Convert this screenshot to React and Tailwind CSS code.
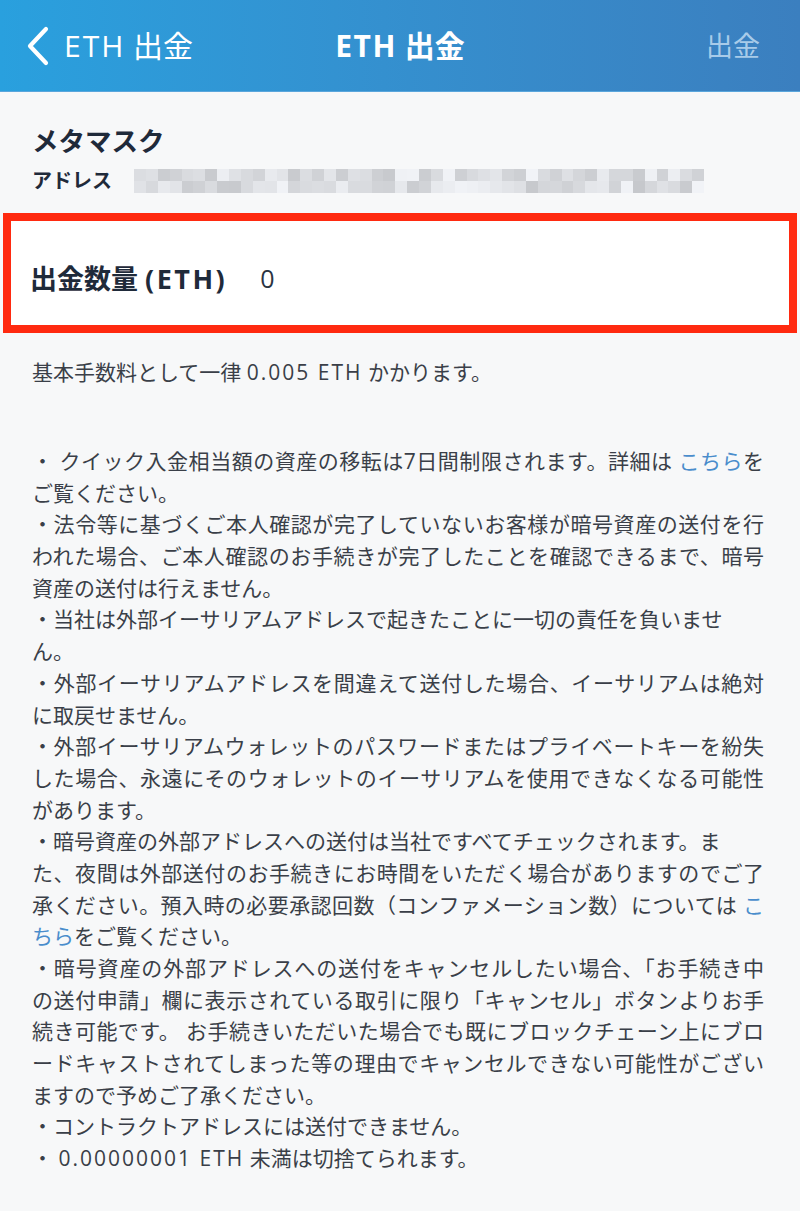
import React from "react";

const FONT = { fontFamily: '"Open Sans", "Noto Sans CJK JP", "Noto Sans", sans-serif' };

function Blur() {
  const shades = [];
  let s = 7;
  for (let r = 0; r < 2; r++) {
    const row = [];
    for (let c = 0; c < 48; c++) {
      s = (s * 9301 + 49297) % 233280;
      const v = 198 + Math.floor((s / 233280) * 44);
      row.push(`rgb(${v},${v + 2},${v + 6})`);
    }
    shades.push(row);
  }
  return (
    <div className="flex flex-col w-[570px] h-[24px] ml-[22px]">
      {shades.map((row, i) => (
        <div key={i} className="flex flex-1">
          {row.map((c, j) => (
            <div key={j} className="flex-1" style={{ background: c }} />
          ))}
        </div>
      ))}
    </div>
  );
}

const L = ({ children, j }) => (
  <div
    className={
      "whitespace-nowrap h-[31.7px] leading-[31.7px] " +
      (j ? "text-justify [text-align-last:justify]" : "")
    }
  >
    {children}
  </div>
);

const A = ({ children }) => <span className="text-[#4a8dcc]">{children}</span>;
const W = ({ children }) => <span className="tracking-[2px]">{children}</span>;

export default function App() {
  return (
    <div className="min-h-[1211px] w-[800px] bg-[#f7f8f9]" style={FONT}>
      <header className="h-[92px] bg-gradient-to-r from-[#29a0de] to-[#3b7fbf] grid grid-cols-[1fr_auto_1fr] items-center border-b border-[#5aa6dc]">
        <div className="flex items-center pl-[24px]">
          <svg width="28" height="40" viewBox="0 0 28 40" className="mr-[12px]">
            <path d="M22 3 L6 20 L22 37" fill="none" stroke="#ffffff" strokeWidth="4.2" strokeLinecap="round" strokeLinejoin="round" />
          </svg>
          <span className="text-white text-[30px] leading-none">
            <span className="tracking-[2px]">ETH</span> 出金
          </span>
        </div>
        <div className="text-white text-[30px] font-bold leading-none">
          <span className="tracking-[1.5px]">ETH</span> 出金
        </div>
        <div className="flex justify-end pr-[40px]">
          <span className="text-[#a8cbe9] text-[27px] leading-none">出金</span>
        </div>
      </header>

      <section className="pt-[31px] px-[32px]">
        <div className="text-[26.5px] leading-[36px] font-bold text-[#1f2a3a]">メタマスク</div>
        <div className="mt-[8px] h-[28px] flex items-center">
          <span className="text-[20px] font-bold text-[#1f2a3a] leading-none">アドレス</span>
          <Blur />
        </div>
      </section>

      <div className="mx-[3px] mt-[18px] h-[120px] border-[8px] border-[#ff2a10] bg-white flex items-center pl-[19px] pt-[12px]">
        <span className="text-[27px] font-bold text-[#1f2a3a]">
          出金数量 <span className="tracking-[2.5px]">(ETH)</span>
        </span>
        <span className="ml-[33px] text-[25px] text-[#2b3442]">0</span>
      </div>

      <div className="px-[32px] mt-[23px] text-[21px] leading-[32px] text-[#3a3f48]">
        基本手数料として一律 <W>0.005 ETH</W> かかります。
      </div>

      <div className="mt-[58px] pl-[32px] w-[764px] text-[21px] text-[#3a3f48]">
        <L j>・ クイック入金相当額の資産の移転は7日間制限されます。詳細は <A>こちら</A>を</L>
        <L>ご覧ください。</L>
        <L j>・法令等に基づくご本人確認が完了していないお客様が暗号資産の送付を行</L>
        <L j>われた場合、ご本人確認のお手続きが完了したことを確認できるまで、暗号</L>
        <L>資産の送付は行えません。</L>
        <L>・当社は外部イーサリアムアドレスで起きたことに一切の責任を負いませ</L>
        <L>ん。</L>
        <L j>・外部イーサリアムアドレスを間違えて送付した場合、イーサリアムは絶対</L>
        <L>に取戻せません。</L>
        <L j>・外部イーサリアムウォレットのパスワードまたはプライベートキーを紛失</L>
        <L j>した場合、永遠にそのウォレットのイーサリアムを使用できなくなる可能性</L>
        <L>があります。</L>
        <L>・暗号資産の外部アドレスへの送付は当社ですべてチェックされます。ま</L>
        <L j>た、夜間は外部送付のお手続きにお時間をいただく場合がありますのでご了</L>
        <L j>承ください。預入時の必要承認回数（コンファメーション数）については <A>こ</A></L>
        <L><A>ちら</A>をご覧ください。</L>
        <L j>・暗号資産の外部アドレスへの送付をキャンセルしたい場合、「お手続き中</L>
        <L j>の送付申請」欄に表示されている取引に限り「キャンセル」ボタンよりお手</L>
        <L j>続き可能です。 お手続きいただいた場合でも既にブロックチェーン上にブロ</L>
        <L j>ードキャストされてしまった等の理由でキャンセルできない可能性がござい</L>
        <L>ますので予めご了承ください。</L>
        <L>・コントラクトアドレスには送付できません。</L>
        <L>・ <W>0.00000001 ETH</W> 未満は切捨てられます。</L>
      </div>
    </div>
  );
}
